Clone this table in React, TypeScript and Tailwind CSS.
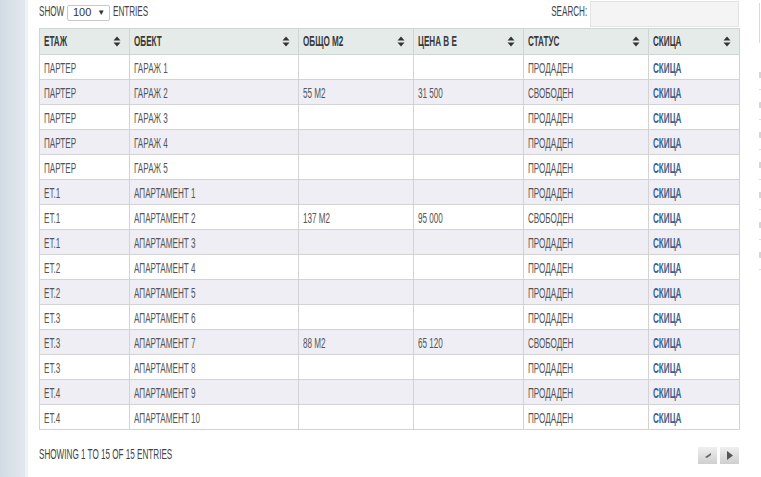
import React from 'react';

type Row = { floor: string; name: string; area: string; price: string; status: string };

const rows: Row[] = [
  { floor: 'ПАРТЕР', name: 'ГАРАЖ 1', area: '', price: '', status: 'ПРОДАДЕН' },
  { floor: 'ПАРТЕР', name: 'ГАРАЖ 2', area: '55 М2', price: '31 500', status: 'СВОБОДЕН' },
  { floor: 'ПАРТЕР', name: 'ГАРАЖ 3', area: '', price: '', status: 'ПРОДАДЕН' },
  { floor: 'ПАРТЕР', name: 'ГАРАЖ 4', area: '', price: '', status: 'ПРОДАДЕН' },
  { floor: 'ПАРТЕР', name: 'ГАРАЖ 5', area: '', price: '', status: 'ПРОДАДЕН' },
  { floor: 'ЕТ.1', name: 'АПАРТАМЕНТ 1', area: '', price: '', status: 'ПРОДАДЕН' },
  { floor: 'ЕТ.1', name: 'АПАРТАМЕНТ 2', area: '137 М2', price: '95 000', status: 'СВОБОДЕН' },
  { floor: 'ЕТ.1', name: 'АПАРТАМЕНТ 3', area: '', price: '', status: 'ПРОДАДЕН' },
  { floor: 'ЕТ.2', name: 'АПАРТАМЕНТ 4', area: '', price: '', status: 'ПРОДАДЕН' },
  { floor: 'ЕТ.2', name: 'АПАРТАМЕНТ 5', area: '', price: '', status: 'ПРОДАДЕН' },
  { floor: 'ЕТ.3', name: 'АПАРТАМЕНТ 6', area: '', price: '', status: 'ПРОДАДЕН' },
  { floor: 'ЕТ.3', name: 'АПАРТАМЕНТ 7', area: '88 М2', price: '65 120', status: 'СВОБОДЕН' },
  { floor: 'ЕТ.3', name: 'АПАРТАМЕНТ 8', area: '', price: '', status: 'ПРОДАДЕН' },
  { floor: 'ЕТ.4', name: 'АПАРТАМЕНТ 9', area: '', price: '', status: 'ПРОДАДЕН' },
  { floor: 'ЕТ.4', name: 'АПАРТАМЕНТ 10', area: '', price: '', status: 'ПРОДАДЕН' },
];

const columns = [
  { title: 'ЕТАЖ', width: 'w-[90px]' },
  { title: 'ОБЕКТ', width: 'w-[169px]' },
  { title: 'ОБЩО М2', width: 'w-[115px]' },
  { title: 'ЦЕНА В Е', width: 'w-[110px]' },
  { title: 'СТАТУС', width: 'w-[125px]' },
  { title: 'СКИЦА', width: 'w-[91px]' },
];

// condensed look: the narrow face squeezed a bit more
function Sq({ children, className = '' }: { children: React.ReactNode; className?: string }) {
  return (
    <span className={`inline-block origin-left scale-x-[0.58] whitespace-nowrap ${className}`}>{children}</span>
  );
}

function SortIcon() {
  return (
    <svg width="8" height="11" viewBox="0 0 8 11" className="shrink-0">
      <path d="M4 0.5 L7.5 4.5 L0.5 4.5 Z" fill="#333" />
      <path d="M0.5 6.5 L7.5 6.5 L4 10.5 Z" fill="#333" />
    </svg>
  );
}

export default function App() {
  return (
    <div className="flex h-[477px] w-[761px] overflow-hidden bg-white font-['Liberation_Sans_Narrow','Liberation_Sans',sans-serif] text-[14px] text-[#555]">
      {/* left page edge */}
      <div className="w-[28px] shrink-0 border-r-[3px] border-[#eef2f5] bg-gradient-to-r from-[#d2dbe4] to-[#e2e8ee]" />

      <div className="ml-[8px] flex w-[703px] shrink-0 flex-col pl-[3px]">
        {/* top controls */}
        <div className="flex h-[28px] items-start justify-between">
          <div className="flex items-center pt-[3px] text-[#444]">
            <div className="w-[28px] -translate-y-[2px]">
              <Sq>SHOW</Sq>
            </div>
            <div className="-mt-[2px] flex h-[16px] w-[43px] items-center gap-[6px] rounded-[2px] border border-[#c8c8c8] bg-white pl-[5px] font-['Liberation_Sans',sans-serif] text-[11px] text-[#333]">
              <span>100</span>
              <span className="text-[8px]">▼</span>
            </div>
            <div className="ml-[3px] w-[40px] -translate-y-[2px]">
              <Sq>ENTRIES</Sq>
            </div>
          </div>
          <div className="flex items-start">
            <div className="mt-[1px] mr-[3px] flex w-[40px] justify-end text-[#444]">
              <span className="inline-block origin-right scale-x-[0.58] whitespace-nowrap">SEARCH:</span>
            </div>
            <div className="mt-[1px] h-[26px] w-[149px] border border-[#e2e2e2] bg-[#f4f4f4]" />
          </div>
        </div>

        {/* table */}
        <table className="w-[700px] table-fixed border-collapse border border-[#cfcfcf]">
          <thead>
            <tr className="h-[26px] bg-[#e5ebe8]">
              {columns.map((c) => (
                <th key={c.title} className={`${c.width} border border-[#cfd5d2] px-[4px] text-left font-bold text-[#3a3a3a]`}>
                  <div className="flex items-center justify-between pr-[4px]">
                    <Sq>{c.title}</Sq>
                    <SortIcon />
                  </div>
                </th>
              ))}
            </tr>
          </thead>
          <tbody>
            {rows.map((r, i) => (
              <tr key={i} className={`h-[25px] ${i % 2 === 1 ? 'bg-[#eeeef4]' : 'bg-white'}`}>
                <td className="border border-[#d3d3d3] px-[4px] pt-[2px] leading-none">
                  <Sq>{r.floor}</Sq>
                </td>
                <td className="border border-[#d3d3d3] px-[4px] pt-[2px] leading-none">
                  <Sq>{r.name}</Sq>
                </td>
                <td className="border border-[#d3d3d3] px-[4px] pt-[2px] leading-none">
                  <Sq>{r.area}</Sq>
                </td>
                <td className="border border-[#d3d3d3] px-[4px] pt-[2px] leading-none">
                  <Sq>{r.price}</Sq>
                </td>
                <td className="border border-[#d3d3d3] px-[4px] pt-[2px] leading-none">
                  <Sq>{r.status}</Sq>
                </td>
                <td className="border border-[#d3d3d3] px-[4px] pt-[2px] leading-none">
                  <Sq className="font-bold text-[#3d618a]">СКИЦА</Sq>
                </td>
              </tr>
            ))}
          </tbody>
        </table>

        {/* footer */}
        <div className="mt-[15px] flex w-[700px] items-center justify-between">
          <Sq className="-translate-y-[1px] text-[#444]">SHOWING 1 TO 15 OF 15 ENTRIES</Sq>
          <div className="flex gap-[3px]">
            <button className="flex h-[17px] w-[19px] items-center justify-center bg-gradient-to-b from-[#efefef] to-[#cfcfcf]">
              <svg width="8" height="8" viewBox="0 0 8 8">
                <path d="M1 5 L7 1 L7 3 L3 6 Z" fill="#666" />
              </svg>
            </button>
            <button className="flex h-[17px] w-[19px] items-center justify-center bg-gradient-to-b from-[#efefef] to-[#cfcfcf]">
              <svg width="8" height="9" viewBox="0 0 8 9">
                <path d="M1 0 L7 4.5 L1 9 Z" fill="#555" />
              </svg>
            </button>
          </div>
        </div>
      </div>

      {/* clipped sidebar edge */}
      <div className="flex flex-1 justify-end pt-[3px]">
        <div className="flex w-[2px] flex-col">
          <div className="h-[40px] border-l border-[#dadada]" />
          <div className="mt-[29px] flex flex-col">
            {[0, 1, 2, 3, 4, 5, 6].map((k) => (
              <div key={k} className="flex h-[30px] flex-col">
                <div className="h-[6px] bg-[#d6d6d6]" />
                <div className="mt-[11px] h-[1px] bg-[#dedede]" />
              </div>
            ))}
          </div>
        </div>
      </div>
    </div>
  );
}
